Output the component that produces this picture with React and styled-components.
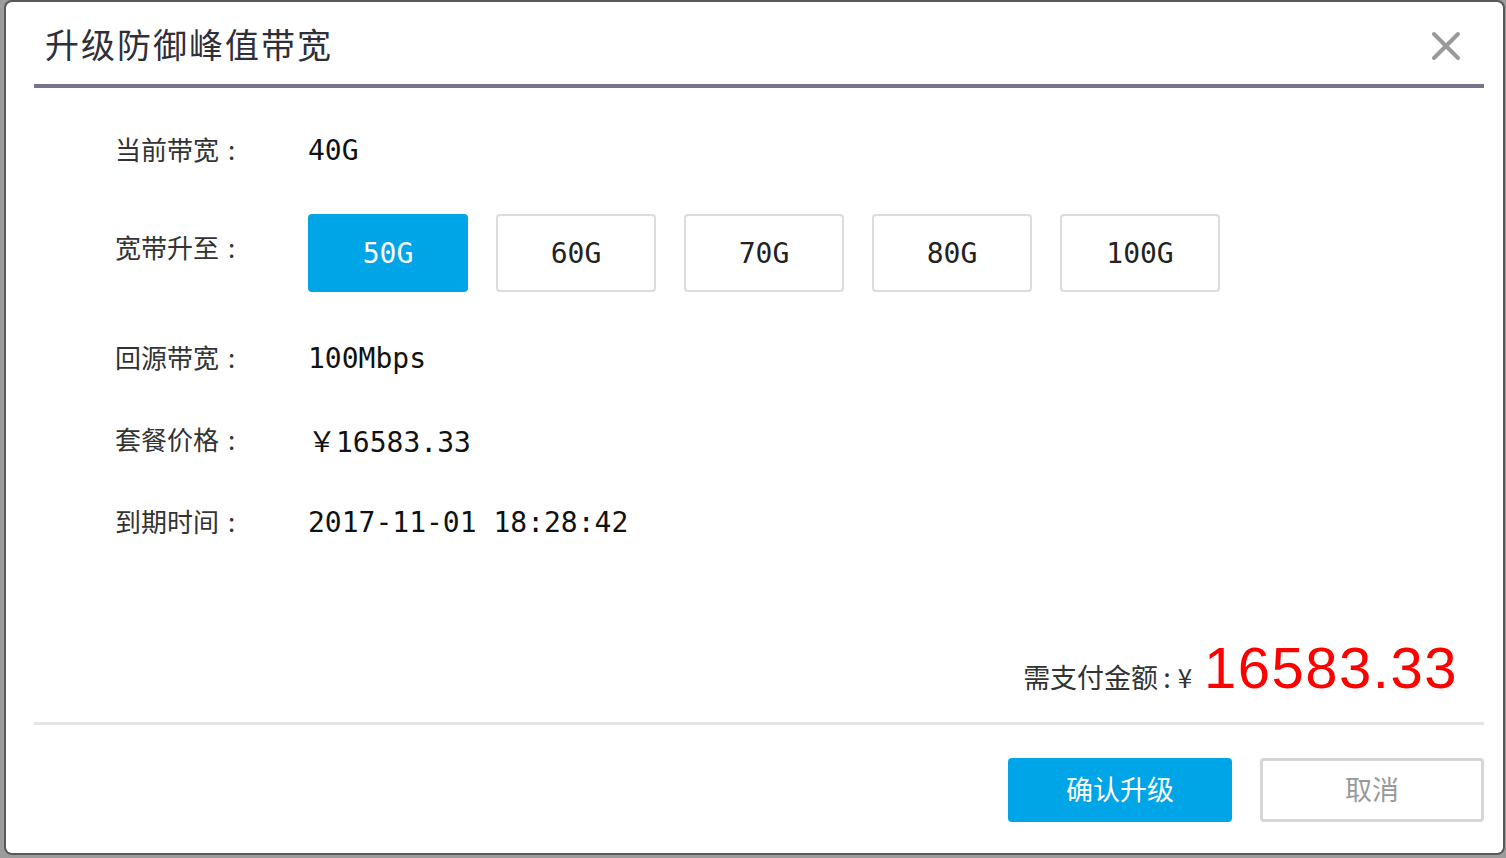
import React, { useState } from "react";
import styled, { createGlobalStyle } from "styled-components";

const GlobalStyle = createGlobalStyle`
  html, body {
    margin: 0;
    padding: 0;
    background: #9c9c9c;
  }
  body {
    font-family: "Noto Sans CJK SC", "Noto Sans", sans-serif;
  }
`;

const Backdrop = styled.div`
  width: 1506px;
  height: 858px;
  box-sizing: border-box;
  padding: 2px 3px 5px 6px;
`;

const Modal = styled.div`
  height: 851px;
  background: #fff;
  border-radius: 6px;
  box-shadow: 0 0 0 2px #595959;
  display: flex;
  flex-direction: column;
`;

const Header = styled.div`
  height: 82px;
  margin: 0 19px 0 28px;
  border-bottom: 4px solid #77738a;
  display: flex;
  align-items: center;
  justify-content: space-between;
  padding: 0 22px 0 11px;
`;

const Title = styled.h2`
  margin: 0;
  font-weight: 400;
  font-size: 34px;
  color: #2f2f3a;
  letter-spacing: 2px;
  padding-top: 1px;
`;

const Close = styled.button`
  width: 32px;
  height: 32px;
  padding: 0;
  border: none;
  background: none;
  cursor: pointer;
  margin-top: 6px;
`;

const Body = styled.div`
  padding: 36px 0 0 109px;
  display: flex;
  flex-direction: column;
  gap: 30px;
`;

const Row = styled.div`
  display: flex;
  align-items: ${(p) => (p.top ? "flex-start" : "center")};
  height: ${(p) => p.h || 52}px;
  margin: ${(p) => p.m || "0"};
`;

const Label = styled.div`
  width: 193px;
  font-size: 26px;
  color: #333;
  margin-top: ${(p) => p.mt || -3}px;
`;

const Colon = styled.span`
  margin: 0 ${(p) => p.r || 0}px 0 ${(p) => p.l || 9}px;
`;

const Value = styled.div`
  font-family: "DejaVu Sans Mono", "Liberation Mono", "Noto Sans CJK SC", monospace;
  font-size: 28px;
  color: #111;
`;

const Options = styled.div`
  display: flex;
  gap: 28px;
`;

const Option = styled.button`
  width: 160px;
  height: 78px;
  box-sizing: border-box;
  border-radius: 4px;
  border: 2px solid ${(p) => (p.active ? "#00a5e8" : "#dcdcdc")};
  background: ${(p) => (p.active ? "#00a5e8" : "#fff")};
  color: ${(p) => (p.active ? "#fff" : "#222")};
  font-family: "DejaVu Sans Mono", "Liberation Mono", monospace;
  font-size: 28px;
  padding: 0;
  cursor: pointer;
`;

const Pay = styled.div`
  margin-top: auto;
  display: flex;
  justify-content: flex-end;
  align-items: baseline;
  padding: 0 45px 25px 0;
  color: #333;
`;

const PayLabel = styled.span`
  font-size: 27px;
`;

const Yen = styled.span`
  font-size: 26px;
  margin: 0 12px 0 0;
`;

const Amount = styled.span`
  font-family: "Liberation Sans", "Noto Sans", sans-serif;
  font-size: 58px;
  line-height: 1;
  color: #ff0000;
  letter-spacing: 1.5px;
`;

const Divider = styled.div`
  height: 3px;
  background: #e5e5e5;
  margin: 0 19px 0 28px;
`;

const Footer = styled.div`
  display: flex;
  justify-content: flex-end;
  gap: 28px;
  padding: 33px 19px 31px 0;
`;

const FooterButton = styled.button`
  width: 224px;
  height: 64px;
  box-sizing: border-box;
  border-radius: 4px;
  font-family: "Noto Sans CJK SC", sans-serif;
  font-size: 27px;
  padding: 0 0 3px;
  cursor: pointer;
  border: ${(p) => (p.primary ? "none" : "3px solid #d6d6d6")};
  background: ${(p) => (p.primary ? "#00a5e8" : "#fff")};
  color: ${(p) => (p.primary ? "#fff" : "#999")};
`;

const options = ["50G", "60G", "70G", "80G", "100G"];

const App = () => {
  const [selected, setSelected] = useState("50G");

  return (
    <>
      <GlobalStyle />
      <Backdrop>
        <Modal>
          <Header>
            <Title>升级防御峰值带宽</Title>
            <Close aria-label="关闭">
              <svg width="32" height="32" viewBox="0 0 32 32">
                <path
                  d="M4 4 L28 28 M28 4 L4 28"
                  stroke="#9a9a9a"
                  strokeWidth="4"
                  strokeLinecap="round"
                />
              </svg>
            </Close>
          </Header>

          <Body>
            <Row>
              <Label>
                当前带宽<Colon>:</Colon>
              </Label>
              <Value>40G</Value>
            </Row>
            <Row h={78} top m="8px 0 10px">
              <Label mt={14}>
                宽带升至<Colon>:</Colon>
              </Label>
              <Options>
                {options.map((o) => (
                  <Option
                    key={o}
                    active={selected === o}
                    onClick={() => setSelected(o)}
                  >
                    {o}
                  </Option>
                ))}
              </Options>
            </Row>
            <Row>
              <Label>
                回源带宽<Colon>:</Colon>
              </Label>
              <Value>100Mbps</Value>
            </Row>
            <Row>
              <Label>
                套餐价格<Colon>:</Colon>
              </Label>
              <Value>￥16583.33</Value>
            </Row>
            <Row>
              <Label>
                到期时间<Colon>:</Colon>
              </Label>
              <Value>2017-11-01 18:28:42</Value>
            </Row>
          </Body>

          <Pay>
            <PayLabel>
              需支付金额<Colon l={5} r={7}>:</Colon>
            </PayLabel>
            <Yen>¥</Yen>
            <Amount>16583.33</Amount>
          </Pay>
          <Divider />
          <Footer>
            <FooterButton primary>确认升级</FooterButton>
            <FooterButton>取消</FooterButton>
          </Footer>
        </Modal>
      </Backdrop>
    </>
  );
};

export default App;
